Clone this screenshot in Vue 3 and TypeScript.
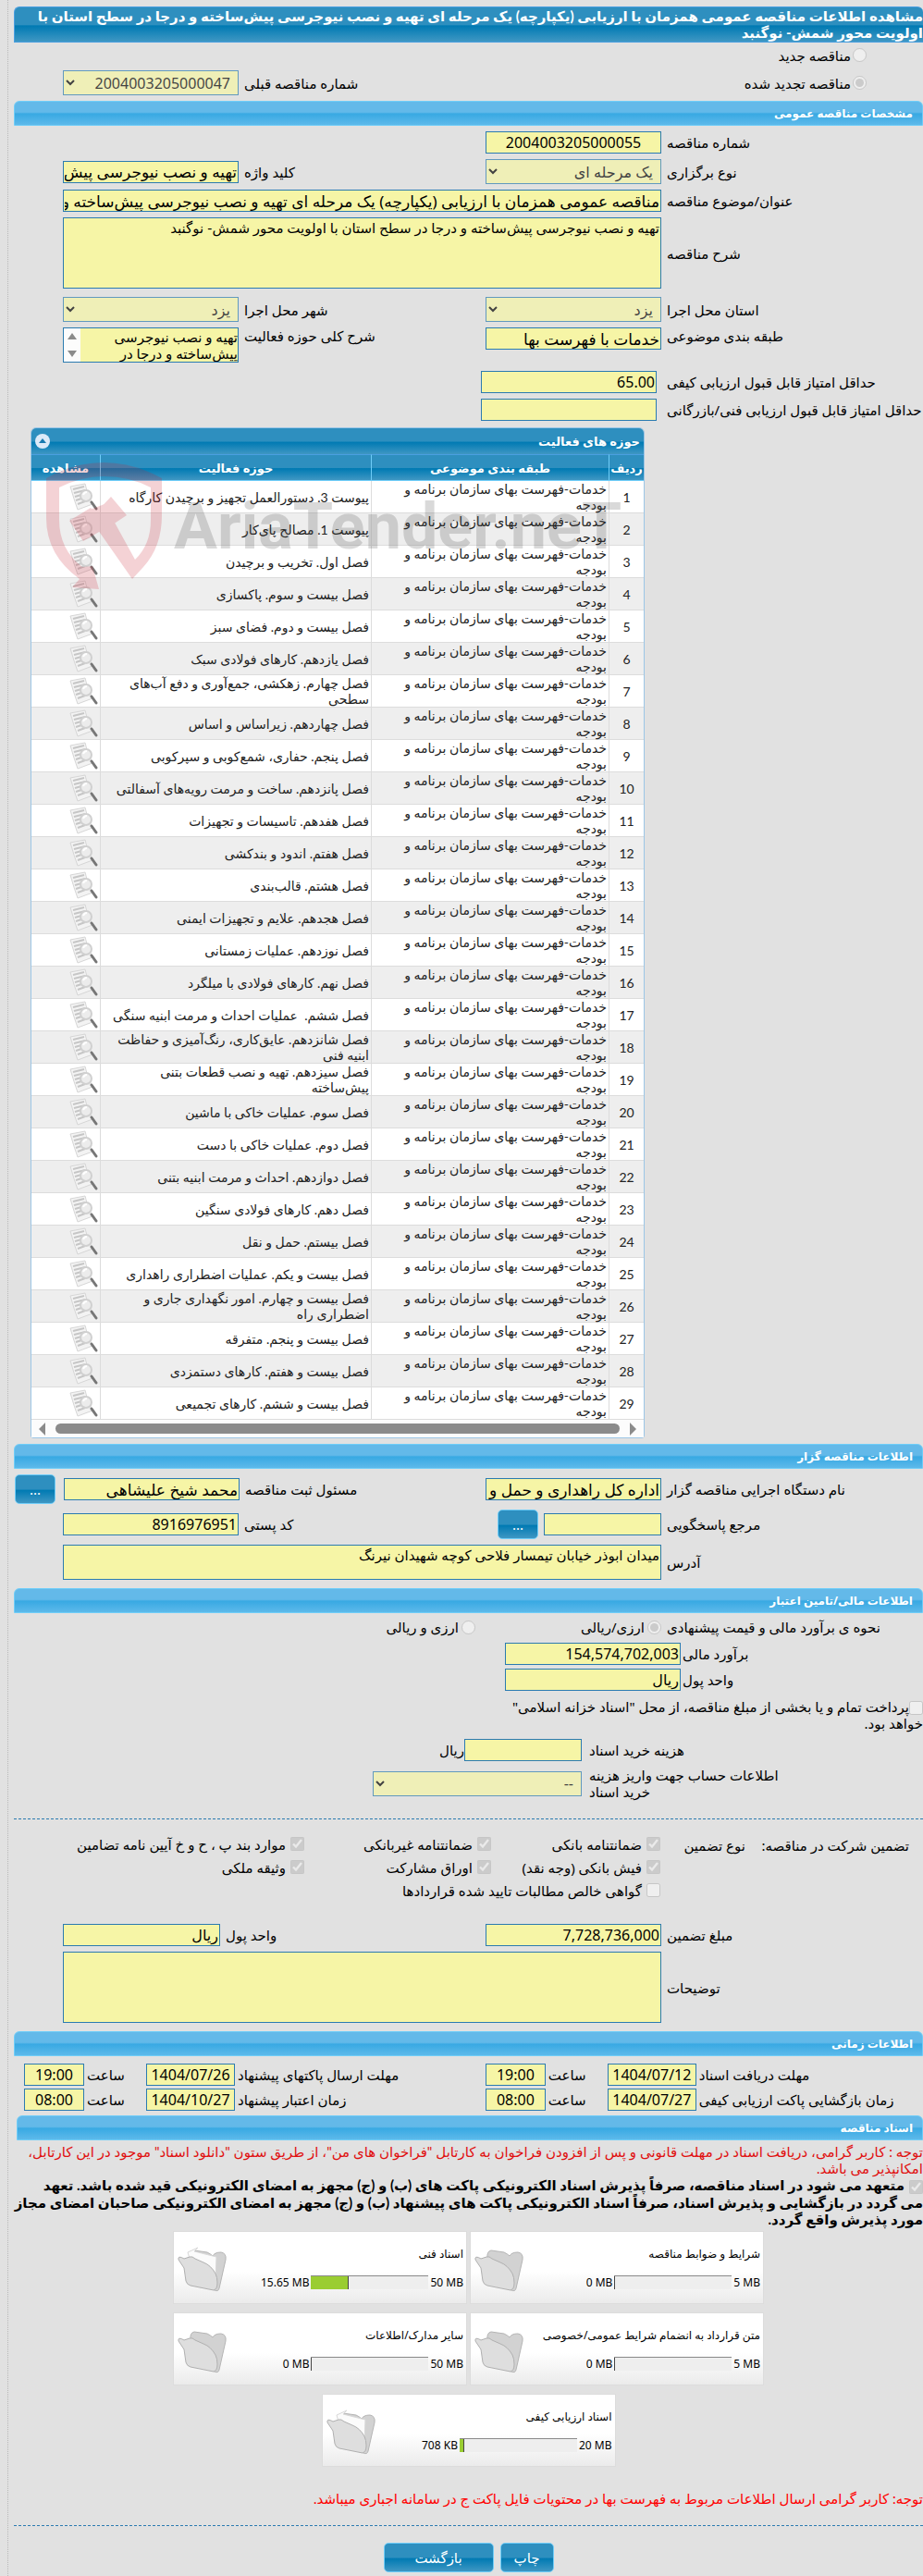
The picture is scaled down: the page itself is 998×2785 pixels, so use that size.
<script setup lang="ts">
interface Activity {
  title: string
}
interface DocCard {
  title: string
  limit: string
  used: string
  percent: number
  filled: boolean
}

const category = 'خدمات-فهرست بهای سازمان برنامه و\nبودجه'

const activities: Activity[] = [
  'پیوست 3. دستورالعمل تجهیز و برچیدن کارگاه',
  'پیوست 1. مصالح پای‌کار',
  'فصل اول. تخریب و برچیدن',
  'فصل بیست و سوم. پاکسازی',
  'فصل بیست و دوم. فضای سبز',
  'فصل یازدهم. کارهای فولادی سبک',
  'فصل چهارم. زهکشی، جمع‌آوری و دفع آب‌های\nسطحی',
  'فصل چهاردهم. زیراساس و اساس',
  'فصل پنجم. حفاری، شمع‌کوبی و سپرکوبی',
  'فصل پانزدهم. ساخت و مرمت رویه‌های آسفالتی',
  'فصل هفدهم. تاسیسات و تجهیزات',
  'فصل هفتم. اندود و بندکشی',
  'فصل هشتم. قالب‌بندی',
  'فصل هجدهم. علایم و تجهیزات ایمنی',
  'فصل نوزدهم. عملیات زمستانی',
  'فصل نهم. کارهای فولادی با میلگرد',
  'فصل ششم.  عملیات احداث و مرمت ابنیه سنگی',
  'فصل شانزدهم. عایق‌کاری، رنگ‌آمیزی و حفاظت\nابنیه فنی',
  'فصل سیزدهم. تهیه و نصب قطعات بتنی\nپیش‌ساخته',
  'فصل سوم. عملیات خاکی با ماشین',
  'فصل دوم. عملیات خاکی با دست',
  'فصل دوازدهم. احداث و مرمت ابنیه بتنی',
  'فصل دهم. کارهای فولادی سنگین',
  'فصل بیستم. حمل و نقل',
  'فصل بیست و یکم. عملیات اضطراری راهداری',
  'فصل بیست و چهارم. امور نگهداری جاری و\nاضطراری راه',
  'فصل بیست و پنجم. متفرقه',
  'فصل بیست و هفتم. کارهای دستمزدی',
  'فصل بیست و ششم. کارهای تجمیعی',
].map((title) => ({ title }))

const cards: DocCard[] = [
  { title: 'شرایط و ضوابط مناقصه', limit: '5 MB', used: '0 MB', percent: 0, filled: false },
  { title: 'اسناد فنی', limit: '50 MB', used: '15.65 MB', percent: 32, filled: true },
  { title: 'متن قرارداد به انضمام شرایط عمومی/خصوصی', limit: '5 MB', used: '0 MB', percent: 0, filled: false },
  { title: 'سایر مدارک/اطلاعات', limit: '50 MB', used: '0 MB', percent: 0, filled: false },
  { title: 'اسناد ارزیابی کیفی', limit: '20 MB', used: '708 KB', percent: 4, filled: true },
]

const guarantees = [
  { id: 'g1', text: 'ضمانتنامه بانکی', on: true },
  { id: 'g2', text: 'ضمانتنامه غیربانکی', on: true },
  { id: 'g3', text: 'موارد بند پ ، ح و خ آیین نامه تضامین', on: true },
  { id: 'g4', text: 'فیش بانکی (وجه نقد)', on: true },
  { id: 'g5', text: 'اوراق مشارکت', on: true },
  { id: 'g6', text: 'وثیقه ملکی', on: true },
]

const times = [
  { id: 't1', label: 'مهلت دریافت اسناد', date: '1404/07/12', hour: '19:00' },
  { id: 't2', label: 'مهلت ارسال پاکتهای پیشنهاد', date: '1404/07/26', hour: '19:00' },
  { id: 't3', label: 'زمان بازگشایی پاکت ارزیابی کیفی', date: '1404/07/27', hour: '08:00' },
  { id: 't4', label: 'زمان اعتبار پیشنهاد', date: '1404/10/27', hour: '08:00' },
]
</script>

<template>
  <main class="page" dir="rtl">
    <h1 class="title">
      مشاهده اطلاعات مناقصه عمومی همزمان با ارزیابی (یکپارچه) یک مرحله ای تهیه و نصب نیوجرسی پیش‌ساخته و درجا در سطح استان با<br />
      اولویت محور شمش- نوگنبد
    </h1>

    <div class="row kind">
      <span class="choice"><input id="kind-new" type="radio" name="kind" disabled /><label for="kind-new">مناقصه جدید</label></span>
    </div>
    <div class="row kind">
      <span class="choice"><input id="kind-renew" type="radio" name="kind" checked disabled /><label for="kind-renew">مناقصه تجدید شده</label></span>
      <label class="second" for="prev">شماره مناقصه قبلی</label>
      <select id="prev" class="field" disabled><option>2004003205000047</option></select>
    </div>

    <h2 class="section">مشخصات مناقصه عمومی</h2>
    <div class="row">
      <label class="first" for="no">شماره مناقصه</label>
      <input id="no" class="field centered" type="text" value="2004003205000055" readonly />
    </div>
    <div class="row tall">
      <label class="first" for="type">نوع برگزاری</label>
      <select id="type" class="field" disabled><option>یک مرحله ای</option></select>
      <label class="second" for="keyword">کلید واژه</label>
      <input id="keyword" class="field fa" type="text" value="تهیه و نصب نیوجرسی پیش‌ساخته و درجا" readonly />
    </div>
    <div class="row">
      <label class="first" for="subject">عنوان/موضوع مناقصه</label>
      <input id="subject" class="wide fa" type="text" value="مناقصه عمومی همزمان با ارزیابی (یکپارچه) یک مرحله ای تهیه و نصب نیوجرسی پیش‌ساخته و درجا در سطح استان" readonly />
    </div>
    <div class="row area">
      <label class="first" for="desc">شرح مناقصه</label>
      <textarea id="desc" class="wide" readonly>تهیه و نصب نیوجرسی پیش‌ساخته و درجا در سطح استان با اولویت محور شمش- نوگنبد</textarea>
    </div>
    <div class="row tall place">
      <label class="first" for="province">استان محل اجرا</label>
      <select id="province" class="field" disabled><option>یزد</option></select>
      <label class="second" for="city">شهر محل اجرا</label>
      <select id="city" class="field" disabled><option>یزد</option></select>
    </div>
    <div class="row top">
      <label class="first" for="cat">طبقه بندی موضوعی</label>
      <input id="cat" class="field fa" type="text" value="خدمات با فهرست بها" readonly />
      <label class="second" for="scope">شرح کلی حوزه فعالیت</label>
      <span class="field scroller">
        <textarea id="scope" readonly>تهیه و نصب نیوجرسی
پیش‌ساخته و درجا در</textarea>
        <svg class="arrows" viewBox="0 0 18 36" aria-hidden="true">
          <path d="M4 12h10L9 5zM4 24h10l-5 7z" fill="#8b8b8b" />
        </svg>
      </span>
    </div>
    <div class="row score">
      <label class="first" for="minq">حداقل امتیاز قابل قبول ارزیابی کیفی</label>
      <input id="minq" class="field" type="text" value="65.00" readonly />
    </div>
    <div class="row score">
      <label class="first" for="mint">حداقل امتیاز قابل قبول ارزیابی فنی/بازرگانی</label>
      <input id="mint" class="field" type="text" value="" readonly />
    </div>

    <section class="panel">
      <h3 class="panel-title">
        حوزه های فعالیت
        <button class="collapse" type="button" aria-label="بستن">
          <svg viewBox="0 0 16 16"><circle cx="8" cy="8" r="8" fill="#dceaf8" /><path d="M4 10h8L8 5z" fill="#1a7ab0" /></svg>
        </button>
      </h3>
      <table>
        <thead>
          <tr><th class="c-no">ردیف</th><th class="c-cat">طبقه بندی موضوعی</th><th>حوزه فعالیت</th><th class="c-view">مشاهده</th></tr>
        </thead>
        <tbody>
          <tr v-for="(a, i) in activities" :key="i">
            <td class="num">{{ i + 1 }}</td>
            <td class="cat">{{ category }}</td>
            <td class="act">{{ a.title }}</td>
            <td class="view">
              <svg class="doc" viewBox="0 0 31 30" aria-hidden="true">
                <path d="M1 4 17 1q2 12 8 22L9 29Q5 18 1 4z" fill="#f3f3f3" stroke="#d6d6d6" />
                <path d="m4 7 12-3M5 11l12-3M6 15l7-2M7 19l6-2M9 23l8-3" stroke="#c6c6c6" stroke-width="2" />
                <circle cx="18" cy="14" r="6" fill="#ececec" stroke="#d0d0d0" stroke-width="2" />
                <path d="M15 13q1-3 4-3" fill="none" stroke="#fff" stroke-width="2" />
                <path d="m24 21 5 7" stroke="#777" stroke-width="3" stroke-linecap="round" />
              </svg>
            </td>
          </tr>
        </tbody>
      </table>
      <div class="hscroll" aria-hidden="true">
        <svg viewBox="0 0 8 14"><path d="M0 0v14l7-7z" fill="#8b8b8b" /></svg>
        <span class="thumb"></span>
        <svg viewBox="0 0 8 14"><path d="M8 0v14L1 7z" fill="#8b8b8b" /></svg>
      </div>
      <div class="mark" dir="ltr" aria-hidden="true">
        <svg viewBox="0 0 126 138">
          <path fill-rule="evenodd" d="M0 17Q30 0 62 0q32 0 63 17v40q0 34-20 56l-12 13L42 53l21-8 33 60q17-16 17-43V27Q90 15 62 15 38 15 14 27v35q0 32 25 51l11-1 7 25-29-2 8-9Q0 100 0 60z" />
          <path d="m70 37 17 20-21 14-13-16zM48 49l16 22-24 14-15-22z" />
        </svg>
        <span>AriaTender.neT</span>
      </div>
    </section>

    <h2 class="section">اطلاعات مناقصه گزار</h2>
    <div class="row org">
      <label class="first" for="org">نام دستگاه اجرایی مناقصه گزار</label>
      <input id="org" class="field fa" type="text" value="اداره کل راهداری و حمل و نقل جاده ای" readonly />
      <label class="second" for="agent">مسئول ثبت مناقصه</label>
      <input id="agent" class="field fa" type="text" value="محمد شیخ علیشاهی" readonly />
      <button class="btn dots side" type="button">...</button>
    </div>
    <div class="row org">
      <label class="first" for="ref">مرجع پاسخگویی</label>
      <input id="ref" class="mid" type="text" value="" readonly />
      <button class="btn dots" type="button">...</button>
      <label class="second" for="zip">کد پستی</label>
      <input id="zip" class="field" type="text" value="8916976951" readonly />
    </div>
    <div class="row area address">
      <label class="first" for="addr">آدرس</label>
      <textarea id="addr" class="wide" readonly>میدان ابوذر خیابان تیمسار فلاحی کوچه شهیدان نیرنگ</textarea>
    </div>

    <h2 class="section">اطلاعات مالی/تامین اعتبار</h2>
    <div class="row money">
      <span class="first">نحوه ی برآورد مالی و قیمت پیشنهادی</span>
      <span class="pick"><input id="cur1" type="radio" name="cur" checked disabled /><label for="cur1">ارزی/ریالی</label></span>
      <span class="pick"><input id="cur2" type="radio" name="cur" disabled /><label for="cur2">ارزی و ریالی</label></span>
    </div>
    <div class="row estimate">
      <label class="first" for="est">برآورد مالی</label>
      <input id="est" class="field" type="text" value="154,574,702,003" readonly />
    </div>
    <div class="row estimate">
      <label class="first" for="unit">واحد پول</label>
      <input id="unit" class="field" type="text" value="ریال" readonly />
    </div>
    <p class="treasury">
      <input id="treasury" type="checkbox" disabled /><label for="treasury">پرداخت تمام و یا بخشی از مبلغ مناقصه، از محل "اسناد خزانه اسلامی"<br />خواهد بود.</label>
    </p>
    <div class="row fee">
      <label class="first" for="fee">هزینه خرید اسناد</label>
      <input id="fee" class="mid" type="text" value="" readonly /><span>ریال</span>
    </div>
    <div class="row fee account">
      <label class="first" for="acc">اطلاعات حساب جهت واریز هزینه<br />خرید اسناد</label>
      <select id="acc" disabled><option>--</option></select>
    </div>

    <hr />

    <div class="guarantee">
      <span class="g-title">تضمین شرکت در مناقصه:</span>
      <span class="g-kind">نوع تضمین</span>
      <div class="g-grid">
        <span v-for="g in guarantees" :key="g.id" class="check">
          <input :id="g.id" type="checkbox" :checked="g.on" disabled /><label :for="g.id">{{ g.text }}</label>
        </span>
        <span class="check full">
          <input id="g7" type="checkbox" disabled /><label for="g7">گواهی خالص مطالبات تایید شده قراردادها</label>
        </span>
      </div>
    </div>

    <div class="row amount">
      <label class="first" for="amt">مبلغ تضمین</label>
      <input id="amt" class="field" type="text" value="7,728,736,000" readonly />
      <label class="second" for="amtu">واحد پول</label>
      <input id="amtu" class="unit" type="text" value="ریال" readonly />
    </div>
    <div class="row area notes">
      <label class="first" for="notes">توضیحات</label>
      <textarea id="notes" class="wide" readonly></textarea>
    </div>

    <h2 class="section">اطلاعات زمانی</h2>
    <div class="times">
      <div v-for="t in times" :key="t.id" class="time">
        <label class="t-label" :for="t.id">{{ t.label }}</label>
        <input :id="t.id" class="date" type="text" :value="t.date" readonly />
        <label class="t-hour" :for="t.id + 'h'">ساعت</label>
        <input :id="t.id + 'h'" class="hour" type="text" :value="t.hour" readonly />
      </div>
    </div>

    <h2 class="section docs">اسناد مناقصه</h2>
    <p class="warn">
      توجه : کاربر گرامی، دریافت اسناد در مهلت قانونی و پس از افزودن فراخوان به کارتابل "فراخوان های من"، از طریق ستون "دانلود اسناد" موجود در این کارتابل،<br />امکانپذیر می باشد.
    </p>
    <p class="pledge">
      <input id="pledge" type="checkbox" checked disabled /><label for="pledge">متعهد می شود در اسناد مناقصه، صرفاً پذیرش اسناد الکترونیکی پاکت های (ب) و (ج) مجهز به امضای الکترونیکی قید شده باشد. تعهد<br />می گردد در بازگشایی و پذیرش اسناد، صرفاً اسناد الکترونیکی پاکت های پیشنهاد (ب) و (ج) مجهز به امضای الکترونیکی صاحبان امضای مجاز<br />مورد پذیرش واقع گردد.</label>
    </p>

    <div class="cards">
      <article v-for="c in cards" :key="c.title" class="card">
        <div class="card-body">
          <h4>{{ c.title }}</h4>
          <div class="usage">
            <span dir="ltr">{{ c.limit }}</span>
            <span class="bar"><span class="fill" :style="{ width: c.percent + '%' }"></span></span>
            <span dir="ltr">{{ c.used }}</span>
          </div>
        </div>
        <svg class="folder" viewBox="0 0 54 50" aria-hidden="true">
          <path d="M14 14q-1-8 4-9l14 2q4 2 6 4 2-4 9-4 6 1 5 8l-7 31q-1 4-5 2L19 40z" fill="#d2d2d2" stroke="#b5b5b5" />
          <path v-if="c.filled" d="M11 7 22 2l-4 4 24 6-1 28-22-4z" fill="#fbfbfb" stroke="#d8d8d8" />
          <path d="M1 13q1-2 6 1l6-2q3-1 6 2l9 4q8 3 13 12 2 4 2 10 0 7-4 8L14 43q-4-1-5-5L7 24 1 15z" fill="#dedede" stroke="#b0b0b0" />
        </svg>
      </article>
    </div>

    <p class="alert">توجه: کاربر گرامی ارسال اطلاعات مربوط به فهرست بها در محتویات فایل پاکت ج در سامانه اجباری میباشد.</p>
    <hr />
    <div class="actions">
      <button class="btn small" type="button">چاپ</button>
      <button class="btn large" type="button">بازگشت</button>
    </div>
  </main>
</template>

<style>
body {
  background: #e1e1e1;
}
</style>

<style scoped>
* {
  box-sizing: border-box;
}
.page {
  margin-left: 8px;
  border-left: 1px dotted #b8b8b8;
  padding: 7px 0 6px 6px;
  font: 15px/18px "Noto Sans", "DejaVu Sans", sans-serif;
  color: #000;
  overflow: hidden;
}
h1, h2, h3, h4, p {
  margin: 0;
}
.title, .warn, .pledge, .alert, td, textarea {
  font-family: Lato, "DejaVu Sans", sans-serif;
}
.title {
  height: 39px;
  border: 1px solid #4a9fe0;
  border-right: 0;
  border-radius: 6px 6px 0 0;
  background: linear-gradient(#2e8fbf 50%, #007ab3 54%, #3f97c3);
  color: #fff;
  font-size: 15px;
  line-height: 18px;
  white-space: nowrap;
}
.section {
  height: 27px;
  padding-right: 10px;
  border: 1px solid #6fcdf8;
  border-radius: 6px 6px 0 0;
  background: linear-gradient(#63b9e9 45%, #38a9e3 52%, #5db9ea);
  color: #fff;
  font-size: 12px;
  line-height: 26px;
}
input, select, button {
  margin: 0;
  font-family: inherit;
}
input[type="text"], textarea, select {
  border: 1px solid #2b7bb0;
  border-radius: 0;
  background: #f6f5a6;
  color: #000;
}
input[type="text"] {
  height: 24px;
  padding: 0 1px;
  font-size: 16px;
}
input.fa[type="text"] {
  font-size: 17px;
}
select {
  height: 27px;
  padding: 0 4px;
  font-size: 16px;
}
textarea {
  display: block;
  margin: 0;
  padding: 1px;
  font-size: 15px;
  line-height: 18px;
  resize: none;
  overflow: hidden;
}
input[type="radio"], input[type="checkbox"] {
  width: 15px;
  height: 15px;
  flex: none;
}
.row {
  display: flex;
  align-items: center;
  gap: 6px;
  min-height: 24px;
  margin-top: 6px;
  padding-left: 53px;
  white-space: nowrap;
}
.tall {
  min-height: 27px;
}
.first {
  width: 277px;
  text-align: left;
}
.second {
  flex: 1;
  text-align: left;
}
.field {
  width: 190px;
}
.wide {
  flex: 1;
  width: 0;
}
.mid {
  width: 127px;
}
.centered {
  text-align: center;
}
.kind {
  min-height: 27px;
  margin-top: 0;
  padding-right: 61px;
}
.kind + .kind {
  margin: 3px 0 6px;
}
.choice {
  display: flex;
  align-items: center;
  gap: 2px;
}
.area textarea {
  height: 77px;
}
.place {
  margin-top: 9px;
}
.top {
  align-items: flex-start;
}
.scroller {
  display: flex;
  height: 38px;
  border: 1px solid #2b7bb0;
}
.scroller textarea {
  flex: 1;
  width: 0;
  border: 0;
  padding: 0;
}
.arrows {
  width: 18px;
  background: #fcfcfc;
}
.score {
  gap: 11px;
}
.top + .score {
  margin-top: 9px;
}
.panel {
  position: relative;
  width: 664px;
  margin: 7px auto 6px 18px;
  border: 1px solid #9cc6e6;
  border-radius: 6px 6px 3px 3px;
}
.panel-title {
  display: flex;
  align-items: center;
  justify-content: space-between;
  height: 28px;
  padding: 0 4px;
  border-radius: 5px 5px 0 0;
  background: linear-gradient(#2e8fbf 50%, #007ab3 54%, #3f97c3);
  color: #fff;
  font-size: 13px;
}
.collapse {
  width: 16px;
  height: 16px;
  padding: 0;
  border: 0;
  background: none;
}
.collapse svg {
  display: block;
}
table {
  width: 100%;
  border-collapse: separate;
  border-spacing: 0;
  table-layout: fixed;
}
th {
  height: 29px;
  padding: 0;
  border-top: 1px solid #4a9fe0;
  border-bottom: 1px solid #6fcdf8;
  background: linear-gradient(#2e8fbf 50%, #007ab3 54%, #3f97c3);
  color: #fff;
  font-size: 13px;
  line-height: 18px;
}
th + th {
  border-right: 1px solid #6fcdf8;
}
.c-no {
  width: 37px;
}
.c-cat {
  width: 257px;
}
.c-view {
  width: 75px;
}
td {
  height: 35px;
  padding: 0 2px;
  border-bottom: 1px solid #dcdcdc;
  background: #fff;
  color: #222;
  font-size: 14px;
  line-height: 17px;
  white-space: pre;
}
td + td {
  border-right: 1px solid #dcdcdc;
}
tbody tr:nth-child(even) td {
  background: #eee;
}
.num {
  text-align: center;
}
.doc {
  display: block;
  width: 31px;
  height: 30px;
}
.hscroll {
  display: flex;
  align-items: center;
  gap: 11px;
  height: 19px;
  padding: 0 7px;
  background: #fcfcfc;
}
.hscroll svg {
  width: 8px;
  height: 14px;
}
.thumb {
  flex: 1;
  height: 11px;
  border-radius: 6px;
  background: #8b8b8b;
}
.mark {
  position: absolute;
  top: 37px;
  left: 16px;
  display: flex;
  align-items: center;
  gap: 12px;
  opacity: 0.2;
  pointer-events: none;
}
.mark svg {
  width: 126px;
  height: 138px;
  fill: #cc2233;
}
.mark span {
  color: #444;
  font: bold 70px/80px Roboto, sans-serif;
}
.btn {
  border: 1px solid #6fcdf8;
  border-radius: 5px;
  background: linear-gradient(#2e8fbf 50%, #007ab3 54%, #3f97c3);
  color: #fff;
  font-size: 15px;
}
.dots {
  width: 44px;
  height: 32px;
  padding: 0;
}
.org {
  min-height: 32px;
}
.side {
  margin: 0 3px 0 -52px;
}
.address {
  margin-bottom: 9px;
}
.address textarea {
  height: 38px;
}
.money {
  min-height: 26px;
  margin-top: 2px;
}
.pick {
  display: flex;
  align-items: center;
  gap: 3px;
  width: 195px;
}
.estimate {
  gap: 2px;
  margin-top: 4px;
}
.estimate .first {
  width: 260px;
}
.treasury {
  margin-top: 8px;
}
.treasury input {
  vertical-align: middle;
}
.fee {
  gap: 8px;
  margin-top: 8px;
}
.fee .first {
  width: 361px;
}
.fee span {
  margin-right: -8px;
}
.account {
  margin-top: 6px;
}
.account select {
  width: 226px;
}
hr {
  margin: 20px 0 0;
  border: 0;
  border-top: 1px dashed #2b7bb0;
}
.guarantee {
  display: flex;
  margin-top: 14px;
  padding-right: 15px;
  white-space: nowrap;
}
.g-title {
  width: 177px;
  padding-top: 5px;
}
.g-kind {
  width: 92px;
  padding-top: 5px;
}
.g-grid {
  display: grid;
  grid-template-columns: 183px 202px 1fr;
  flex: 1;
}
.check {
  display: flex;
  align-items: center;
  gap: 5px;
  height: 25px;
}
.full {
  grid-column: 1 / -1;
}
.amount {
  margin-top: 24px;
}
.unit {
  width: 170px;
}
.notes {
  margin-bottom: 9px;
}
.times {
  display: grid;
  grid-template-columns: 33fr 34fr;
  gap: 3px 0;
  margin: 8px 0 5px;
  white-space: nowrap;
}
.time {
  display: flex;
  align-items: center;
  gap: 3px;
}
.t-label {
  flex: 1;
  text-align: left;
}
.date {
  width: 96px;
  text-align: center;
}
.t-hour {
  width: 61px;
  text-align: left;
}
.hour {
  width: 65px;
  margin-left: 11px;
  text-align: center;
}
.docs {
  margin-left: 3px;
}
.warn {
  margin-top: 3px;
  color: #e01010;
  white-space: nowrap;
}
.pledge {
  font-weight: bold;
  white-space: nowrap;
}
.pledge input {
  margin-left: 5px;
  vertical-align: middle;
}
.cards {
  display: flex;
  flex-wrap: wrap;
  justify-content: center;
  gap: 9px 3px;
  width: 640px;
  max-width: 100%;
  margin: 4px auto 0;
}
.card {
  display: flex;
  justify-content: space-between;
  width: 318px;
  height: 79px;
  padding: 15px 3px 0 4px;
  border: 1px solid #dcdcdc;
  background: linear-gradient(#fff 55%, #ebebeb);
}
.card-body {
  font-size: 12px;
}
h4 {
  font-size: 12px;
  font-weight: normal;
}
.usage {
  display: flex;
  gap: 2px;
  margin-top: 14px;
  line-height: 15px;
}
.bar {
  display: flex;
  justify-content: flex-end;
  width: 127px;
  height: 15px;
  border-top: 1px solid #8a8a8a;
  background: #eee;
}
.fill {
  border-right: 1px solid #444;
  background: #9acd32;
}
.folder {
  width: 54px;
  height: 50px;
}
.alert {
  margin-top: 25px;
  color: #f00;
  white-space: nowrap;
}
.actions {
  display: flex;
  justify-content: center;
  gap: 7px;
  margin-top: 18px;
}
.actions .btn {
  height: 32px;
}
.small {
  width: 58px;
}
.large {
  width: 119px;
}
</style>
